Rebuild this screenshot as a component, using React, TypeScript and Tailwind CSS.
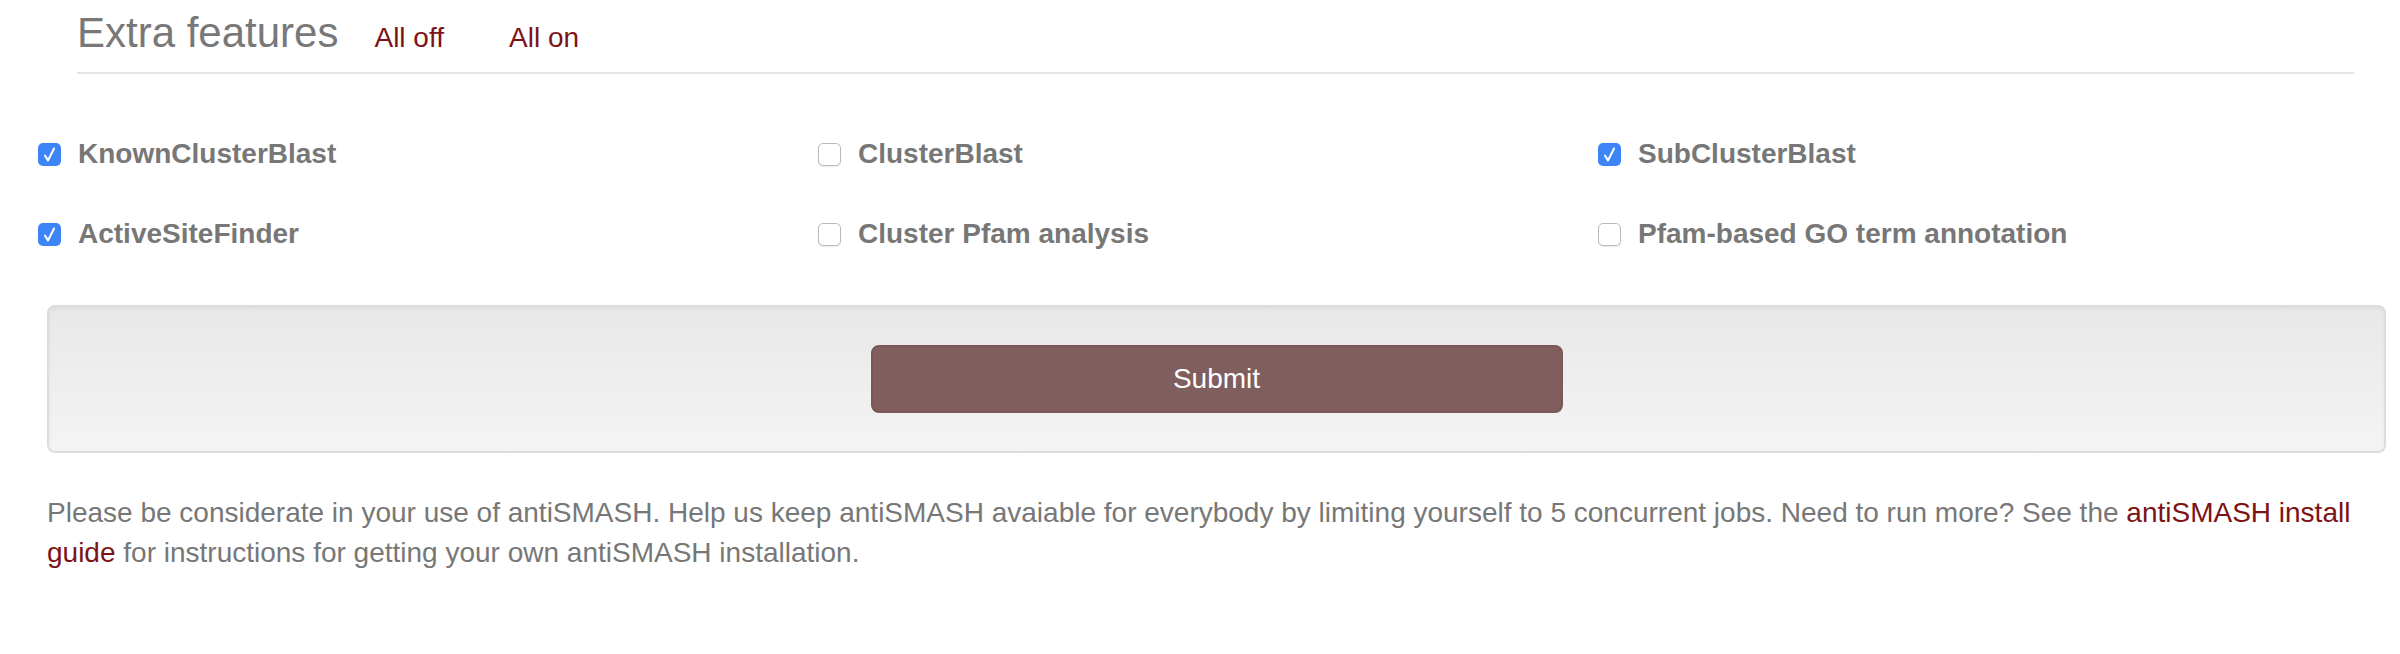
const features = [
  { label: 'KnownClusterBlast', checked: true },
  { label: 'ClusterBlast', checked: false },
  { label: 'SubClusterBlast', checked: true },
  { label: 'ActiveSiteFinder', checked: true },
  { label: 'Cluster Pfam analysis', checked: false },
  { label: 'Pfam-based GO term annotation', checked: false },
];

function Checkbox({ checked }: { checked: boolean }) {
  if (checked) {
    return (
      <span className="flex h-[23px] w-[23px] shrink-0 items-center justify-center rounded-[5px] bg-[#3d85f6]">
        <svg width="15" height="17" viewBox="0 0 15 17" fill="none">
          <path d="M3 9.5 L6 14.5 L12 2.5" stroke="white" strokeWidth="2" strokeLinecap="round" strokeLinejoin="round" />
        </svg>
      </span>
    );
  }
  return (
    <span className="h-[23px] w-[23px] shrink-0 rounded-[5px] border border-[#b9b9b9] bg-white shadow-[0_1px_1px_rgba(0,0,0,0.08)]" />
  );
}

export default function App() {
  return (
    <div className="min-h-[654px] w-[2400px] bg-white font-['Liberation_Sans',Arial,sans-serif] text-[#777]">
      <div className="ml-[77px] mr-[46px] flex h-[74px] items-baseline border-b-2 border-[#e5e5e5] pt-[12px]">
        <span className="text-[42px] leading-[42px] text-[#787878]">Extra features</span>
        <a className="ml-[36px] text-[28px] leading-[40px] text-[#7d1316]" href="#">All off</a>
        <a className="ml-[65px] text-[28px] leading-[40px] text-[#7d1316]" href="#">All on</a>
      </div>

      <div className="ml-[38px] mt-[40px] grid w-[2340px] grid-cols-3">
        {features.map((f) => (
          <label key={f.label} className="flex h-[80px] items-center gap-[17px]">
            <Checkbox checked={f.checked} />
            <span className="text-[28px] font-bold leading-[40px] text-[#777]">{f.label}</span>
          </label>
        ))}
      </div>

      <div className="ml-[47px] mr-[14px] mt-[31px] flex justify-center rounded-[8px] border-2 border-[#dcdcdc] bg-gradient-to-b from-[#e8e8e8] to-[#f4f4f4] p-[38px] shadow-[inset_0_2px_4px_rgba(0,0,0,0.05)]">
        <button className="h-[68px] w-[692px] rounded-[8px] border-2 border-[#7a5857] bg-[#7f5e5d] text-[28px] leading-[40px] text-white">
          Submit
        </button>
      </div>

      <p className="ml-[47px] mr-[14px] mt-[40px] text-[28px] leading-[40px] text-[#777]">
        Please be considerate in your use of antiSMASH. Help us keep antiSMASH avaiable for everybody by limiting yourself to 5 concurrent jobs. Need to run more? See the{' '}
        <a className="text-[#7d1316]" href="#">antiSMASH install guide</a> for instructions for getting your own antiSMASH installation.
      </p>
    </div>
  );
}
